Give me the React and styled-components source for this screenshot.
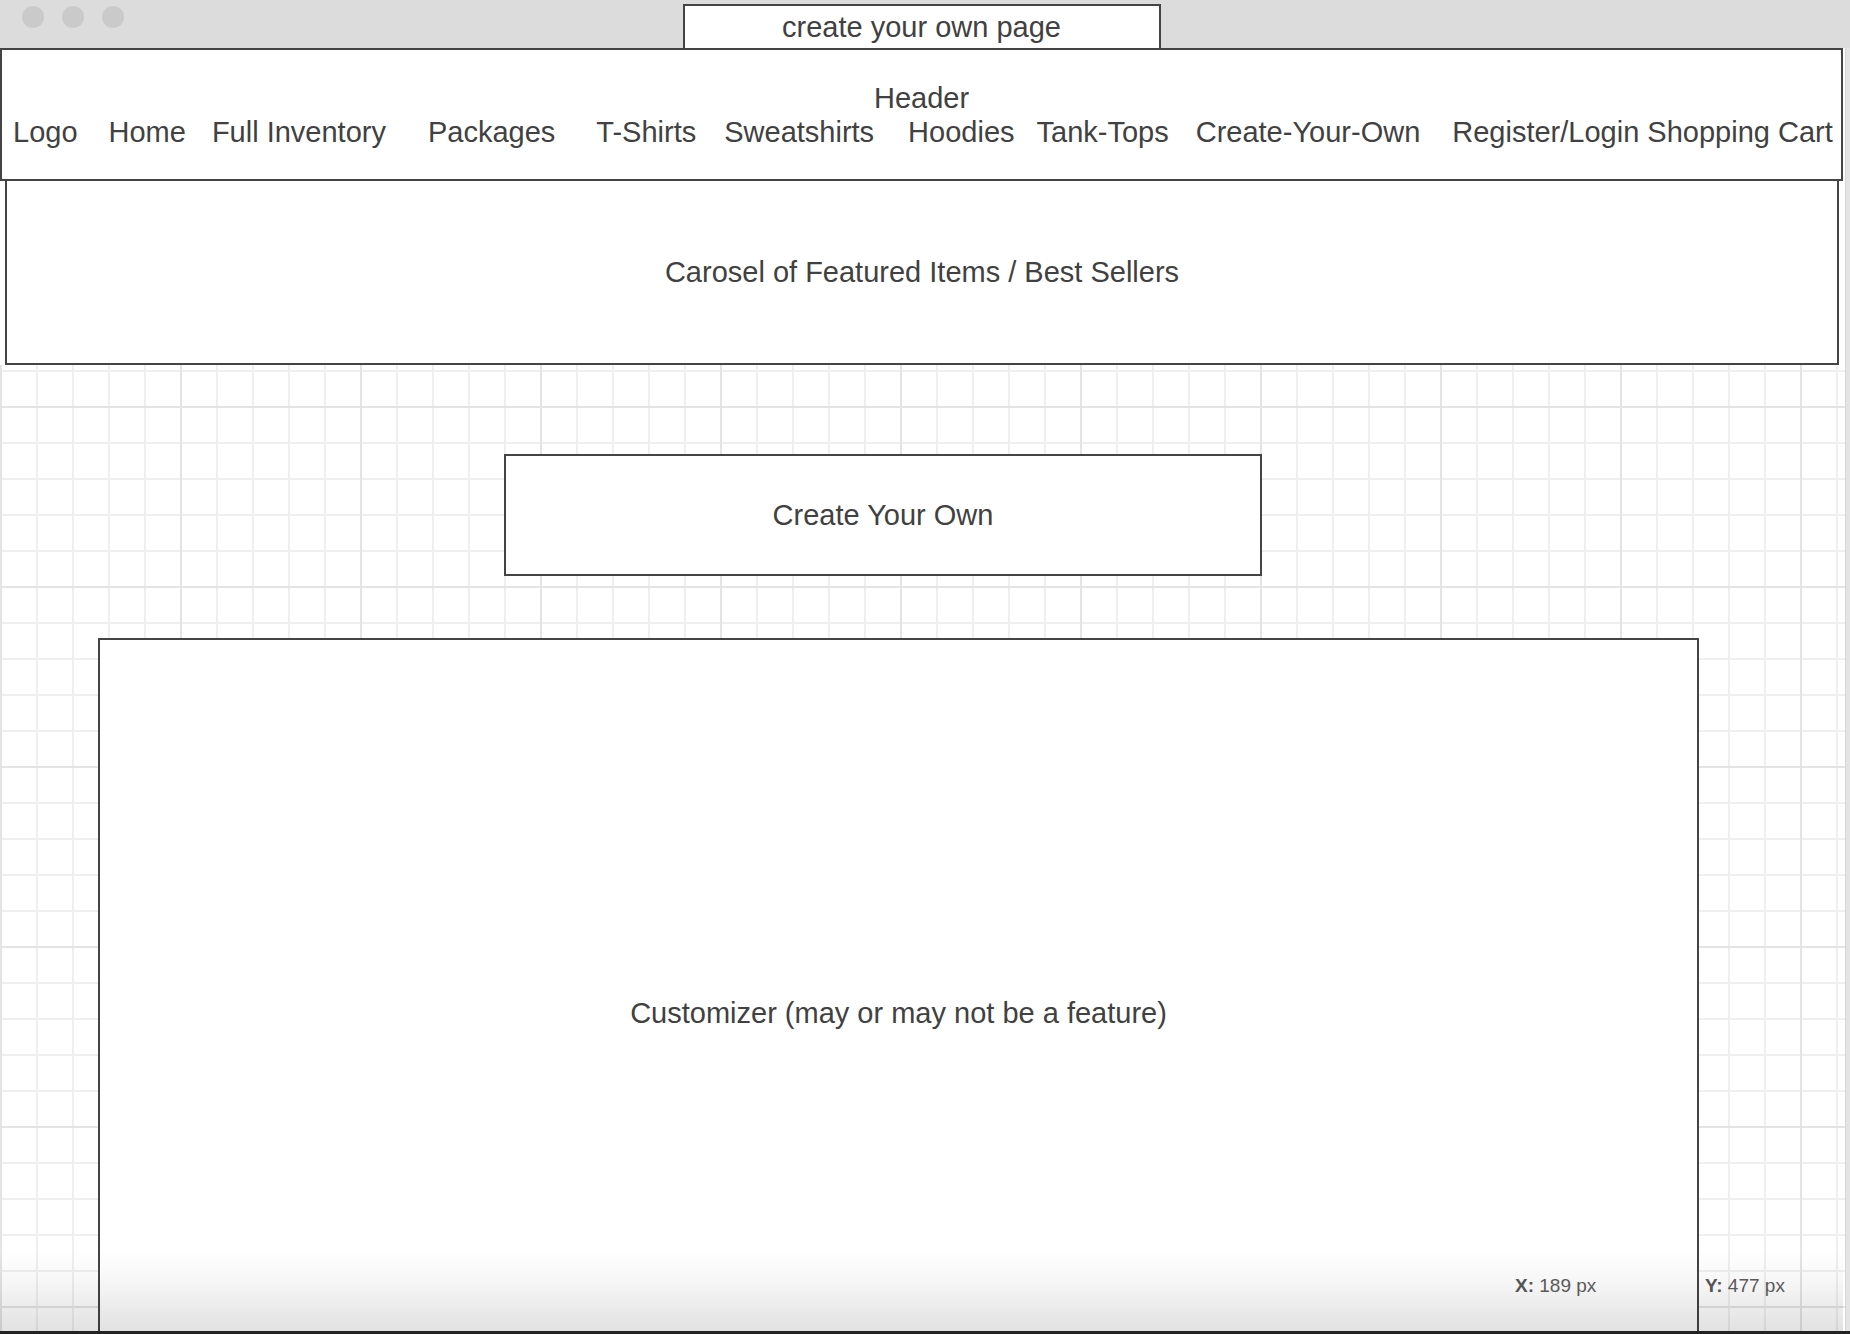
import React from 'react';
import styled, { createGlobalStyle } from 'styled-components';

const navItems = [
  { label: 'Logo', space: 11 },
  { label: 'Home', space: 31 },
  { label: 'Full Inventory', space: 26 },
  { label: 'Packages', space: 42 },
  { label: 'T-Shirts', space: 41 },
  { label: 'Sweatshirts', space: 28 },
  { label: 'Hoodies', space: 34 },
  { label: 'Tank-Tops', space: 22 },
  { label: 'Create-Your-Own', space: 27 },
  { label: 'Register/Login Shopping Cart', space: 32 },
];

const GlobalStyle = createGlobalStyle`
  html, body {
    margin: 0;
    padding: 0;
    background: #fff;
  }
  body {
    font-family: 'Liberation Sans', Arial, sans-serif;
    color: #414141;
  }
`;

const App = () => (
  <>
    <GlobalStyle />
    <Window>
      <TitleBar>
        <Lights>
          <Light />
          <Light />
          <Light />
        </Lights>
        <Tab>create your own page</Tab>
      </TitleBar>
      <Body>
        <Canvas>
          <Top>
            <Header>
              <HeaderTitle>Header</HeaderTitle>
              <Nav>
                {navItems.map((item) => (
                  <NavItem key={item.label} $space={item.space}>
                    {item.label}
                  </NavItem>
                ))}
              </Nav>
            </Header>
            <Carousel>Carosel of Featured Items / Best Sellers</Carousel>
          </Top>
          <CreateBox>Create Your Own</CreateBox>
          <Customizer>Customizer (may or may not be a feature)</Customizer>
        </Canvas>
        <Scrollbar />
      </Body>
      <Ruler>
        <Coord $width={190}>
          <b>X:</b> 189 px
        </Coord>
        <Coord $width={138}>
          <b>Y:</b> 477 px
        </Coord>
      </Ruler>
    </Window>
  </>
);

const Window = styled.div`
  position: relative;
  width: 1850px;
  height: 1334px;
  overflow: hidden;
  display: flex;
  flex-direction: column;
  &::after {
    content: '';
    position: absolute;
    left: 0;
    right: 0;
    bottom: 0;
    height: 3px;
    background: #222;
  }
`;

const TitleBar = styled.div`
  position: relative;
  height: 48px;
  flex: none;
  background: #dcdcdc;
  display: flex;
  justify-content: center;
  align-items: flex-end;
  padding-right: 7px;
`;

const Lights = styled.div`
  position: absolute;
  left: 22px;
  top: 6px;
  display: flex;
  gap: 18px;
`;

const Light = styled.span`
  width: 22px;
  height: 22px;
  border-radius: 50%;
  background: #cacaca;
`;

const Tab = styled.div`
  box-sizing: border-box;
  width: 478px;
  height: 44px;
  border: 2px solid #444;
  border-bottom: none;
  background: #fff;
  font-size: 29px;
  line-height: 42px;
  text-align: center;
`;

const Body = styled.div`
  flex: 1;
  display: flex;
  min-height: 0;
`;

const Canvas = styled.div`
  flex: 1;
  display: flex;
  flex-direction: column;
  align-items: flex-start;
  background-color: #fff;
  background-image:
    linear-gradient(to right, #e4e4e4 2px, transparent 2px),
    linear-gradient(to bottom, #e4e4e4 2px, transparent 2px),
    linear-gradient(to right, #efefef 2px, transparent 2px),
    linear-gradient(to bottom, #efefef 2px, transparent 2px);
  background-size: 180px 180px, 180px 180px, 36px 36px, 36px 36px;
  background-position: 0 -2px;
`;

const Top = styled.div`
  flex: none;
  align-self: stretch;
  background: #fff;
  padding-right: 2px;
`;

const Header = styled.div`
  box-sizing: border-box;
  height: 133px;
  border: 2px solid #444;
  display: flex;
  flex-direction: column;
  justify-content: center;
  align-items: center;
`;

const HeaderTitle = styled.div`
  font-size: 29px;
  line-height: 34px;
`;

const Nav = styled.div`
  align-self: stretch;
  display: flex;
  font-size: 29px;
  line-height: 34px;
  white-space: nowrap;
`;

const NavItem = styled.span`
  margin-left: ${({ $space }) => $space}px;
`;

const Box = styled.div`
  flex: none;
  box-sizing: border-box;
  border: 2px solid #444;
  background: #fff;
  display: flex;
  justify-content: center;
  align-items: center;
  font-size: 29px;
`;

const Carousel = styled(Box)`
  height: 184px;
  margin: 0 4px 0 5px;
  border-top: none;
`;

const CreateBox = styled(Box)`
  width: 758px;
  height: 122px;
  margin: 89px 0 0 504px;
`;

const Customizer = styled(Box)`
  width: 1601px;
  height: 750px;
  margin: 62px 0 0 98px;
`;

const Scrollbar = styled.div`
  width: 5px;
  flex: none;
  background: #e4e4e4;
  border-left: 1px solid #d6d6d6;
  box-sizing: border-box;
`;

const Ruler = styled.div`
  position: absolute;
  left: 0;
  right: 7px;
  bottom: 0;
  height: 84px;
  display: flex;
  justify-content: flex-end;
  align-items: center;
  padding-bottom: 12px;
  box-sizing: border-box;
  background: linear-gradient(
    to bottom,
    rgba(0, 0, 0, 0),
    rgba(0, 0, 0, 0.03) 35%,
    rgba(0, 0, 0, 0.12) 100%
  );
`;

const Coord = styled.div`
  width: ${({ $width }) => $width}px;
  font-size: 19px;
  color: #5a5a5a;
  b {
    color: #555;
  }
`;

export default App;
